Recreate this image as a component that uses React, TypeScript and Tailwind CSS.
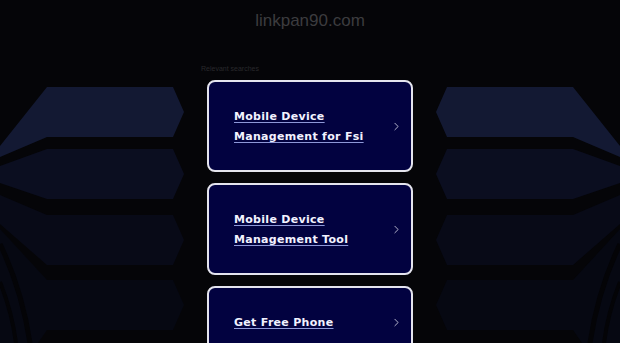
import { ChevronRight } from 'lucide-react'

const searches = [
  { id: 1, label: 'Mobile Device Management for Fsi' },
  { id: 2, label: 'Mobile Device Management Tool' },
  { id: 3, label: 'Get Free Phone' },
]

function Backdrop() {
  const side = (
    <>
      <path d="M447 87 L573 87 L620 146 L620 157 L573 137 L447 137 L436 112 Z" fill="#131933" />
      <path d="M447 149 L573 149 L620 166 L620 183 L573 199 L447 199 L436 174 Z" fill="#0b0e20" />
      <path d="M447 215 L573 215 L620 195 L620 224 L573 265 L447 265 L436 240 Z" fill="#080a17" />
      <path d="M447 280 L573 280 L620 229 L620 343 L582 343 L573 330 L447 330 L436 305 Z" fill="#060812" />
      <path d="M620 244 Q598 290 590 343" stroke="#040407" strokeWidth="5" fill="none" />
      <path d="M620 282 Q608 312 604 343" stroke="#040407" strokeWidth="4" fill="none" />
    </>
  )
  return (
    <svg className="absolute inset-0 h-full w-full" viewBox="0 0 620 343" preserveAspectRatio="none">
      {side}
      <g transform="translate(620 0) scale(-1 1)">{side}</g>
    </svg>
  )
}

export default function App() {
  return (
    <div className="relative h-screen w-full overflow-hidden bg-[#050508]">
      <Backdrop />
      <div className="relative flex flex-col items-center">
        <div className="flex h-[42px] items-center justify-center">
          <h1 className="text-[17px] leading-[20px] text-[#3c3c3f]" style={{ fontFamily: '"Liberation Sans", Arial, sans-serif' }}>
            linkpan90.com
          </h1>
        </div>
        <div className="w-[218px]">
          <div
            className="mt-[22px] text-[7px] leading-[9px] text-[#29292c]"
            style={{ fontFamily: '"Liberation Sans", Arial, sans-serif' }}
          >
            Relevant searches
          </div>
          <div className="mt-[7px] flex flex-col items-center gap-[11px]">
            {searches.map(s => (
              <a
                key={s.id}
                href="#"
                className="flex w-[206px] items-center justify-between rounded-[8px] border-2 border-[#e4e4ee] bg-[#020240] pt-[25px] pb-[23px] pl-[25px] pr-[8px]"
              >
                <span
                  className="max-w-[140px] text-[11px] font-bold leading-[20px] tracking-[0.3px] text-[#f2f2ff] underline decoration-[#8e98d8] underline-offset-2"
                  style={{ fontFamily: '"DejaVu Sans", Verdana, sans-serif' }}
                >
                  {s.label}
                </span>
                <ChevronRight className="-mt-[2px] h-[13px] w-[13px] text-[#e8e8f4]" strokeWidth={1.4} />
              </a>
            ))}
          </div>
        </div>
      </div>
    </div>
  )
}
